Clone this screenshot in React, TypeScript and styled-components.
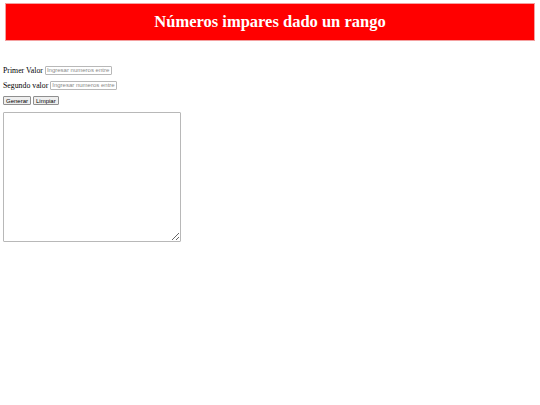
import React from "react";
import styled, { createGlobalStyle } from "styled-components";

const GlobalStyle = createGlobalStyle`
  html, body {
    margin: 0;
    padding: 0;
    background: #ffffff;
  }
  body {
    padding: 3px 5px 0 3px;
    font-family: "Liberation Serif", "Times New Roman", serif;
    font-size: 8px;
    color: #000000;
  }
`;

const Banner = styled.header`
  display: flex;
  align-items: center;
  justify-content: center;
  height: 36px;
  margin: 0 0 0 2px;
  background: #ff0000;
  border: 1px solid #f4a0a0;
`;

const Title = styled.h1`
  margin: 0;
  font-family: "Liberation Serif", Georgia, serif;
  font-size: 16.5px;
  font-weight: bold;
  color: #ffffff;
`;

const Form = styled.form`
  display: flex;
  flex-direction: column;
  align-items: flex-start;
  padding-top: 24px;
  gap: 5px;
`;

const Row = styled.div`
  display: flex;
  align-items: center;
  gap: 2px;
  height: 10px;
`;

const Label = styled.label`
  font-size: 7.8px;
`;

const NumberInput = styled.input`
  box-sizing: border-box;
  width: 67px;
  height: 9px;
  padding: 0 1px;
  border: 1px solid #b8b8b8;
  border-radius: 1px;
  font-family: "Liberation Sans", Arial, sans-serif;
  font-size: 6px;

  &::placeholder {
    color: #8a8a8a;
  }
`;

const Buttons = styled.div`
  display: flex;
  gap: 2px;
  margin-top: 1px;
`;

const Button = styled.button`
  box-sizing: border-box;
  height: 9px;
  padding: 0 2px;
  border: 1px solid #8f8f8f;
  border-radius: 1px;
  background: #efefef;
  font-family: "Liberation Sans", Arial, sans-serif;
  font-size: 6px;
  line-height: 1;
  color: #000000;
`;

const Output = styled.textarea`
  box-sizing: border-box;
  width: 178px;
  height: 130px;
  margin-top: 2px;
  border: 1px solid #b8b8b8;
  border-radius: 1px;
  font-family: "Liberation Mono", monospace;
  font-size: 7px;
`;

export default function App() {
  return (
    <>
      <GlobalStyle />
      <Banner>
        <Title>Números impares dado un rango</Title>
      </Banner>
      <Form onSubmit={(e) => e.preventDefault()}>
        <Row>
          <Label htmlFor="primer">Primer Valor</Label>
          <NumberInput id="primer" type="text" placeholder="Ingresar numeros entre" />
        </Row>
        <Row>
          <Label htmlFor="segundo">Segundo valor</Label>
          <NumberInput id="segundo" type="text" placeholder="Ingresar numeros entre" />
        </Row>
        <Buttons>
          <Button type="button">Generar</Button>
          <Button type="reset">Limpiar</Button>
        </Buttons>
        <Output readOnly />
      </Form>
    </>
  );
}
